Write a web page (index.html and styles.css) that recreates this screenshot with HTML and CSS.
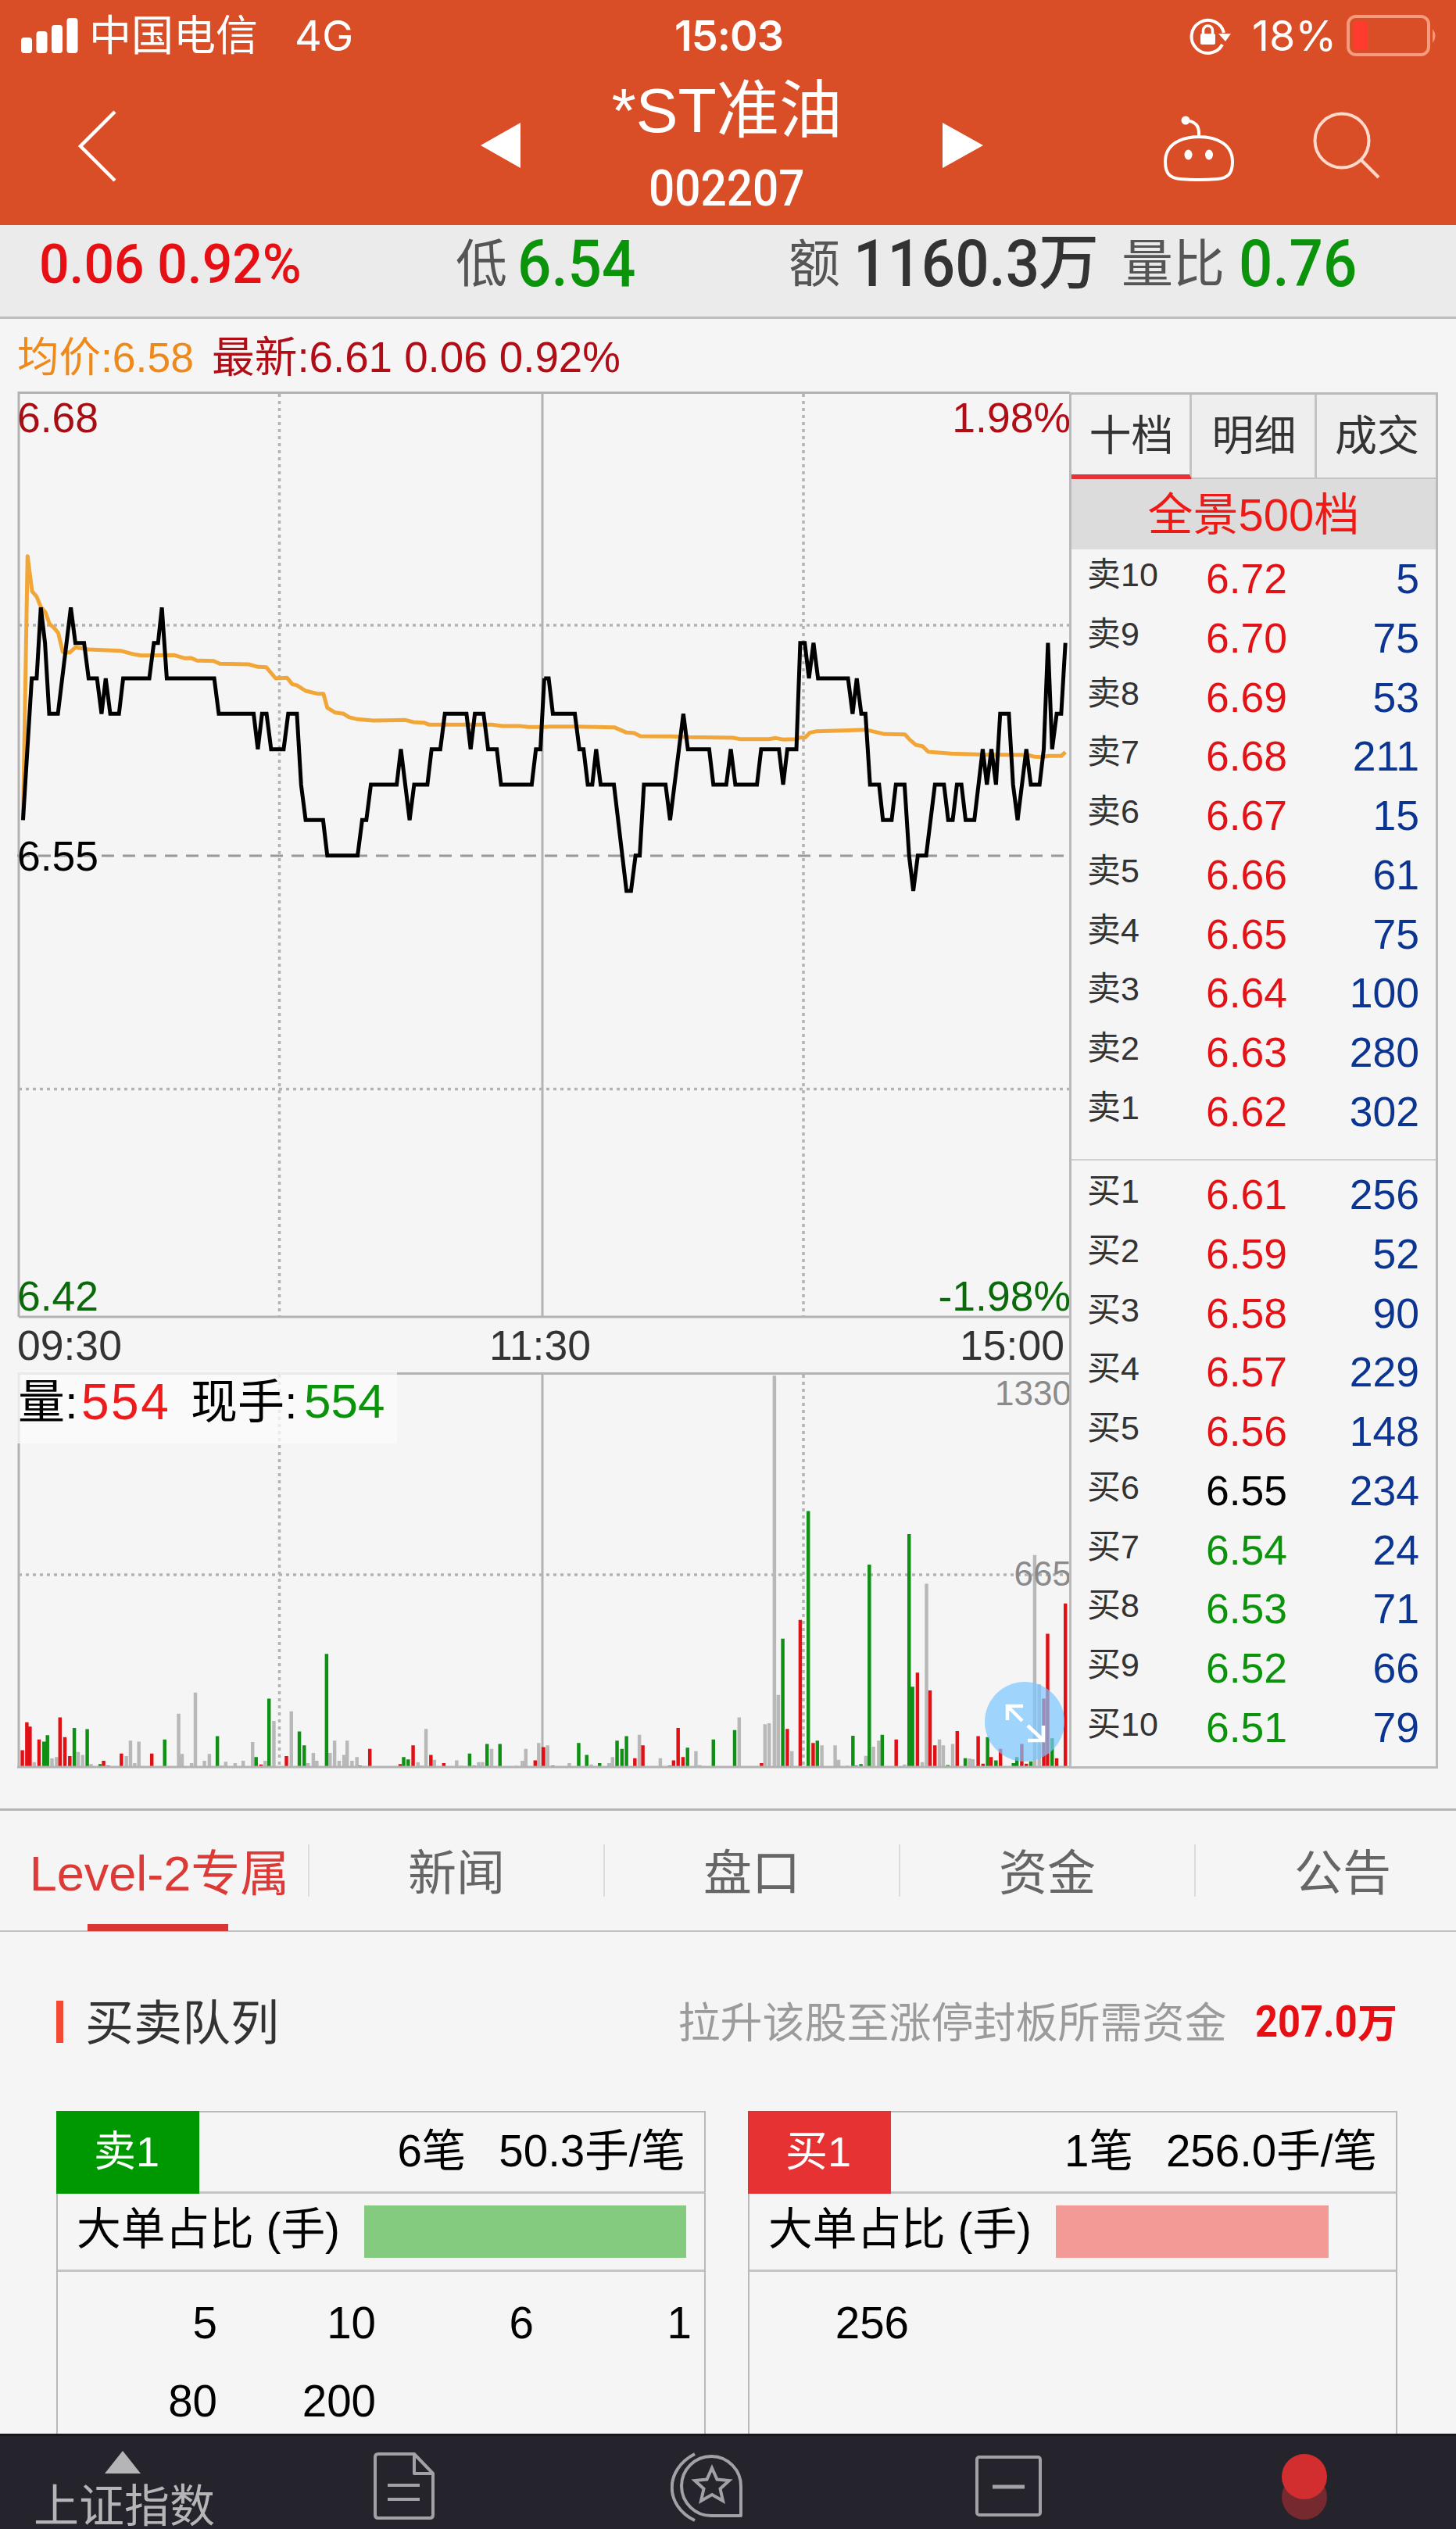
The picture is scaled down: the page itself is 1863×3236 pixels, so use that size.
FILE: index.html
```html
<!DOCTYPE html>
<html lang="zh-CN">
<head>
<meta charset="utf-8">
<title>*ST准油 002207</title>
<link rel="stylesheet" href="styles.css">
</head>
<body>
<div class="app">
  <header class="header">
    <div class="status">
      <svg class="signal" width="74" height="48" viewBox="0 0 74 48" fill="#fff"><rect x="0" y="26" width="14" height="20" rx="4"/><rect x="19.500" y="18" width="14" height="28" rx="4"/><rect x="39" y="10" width="14" height="36" rx="4"/><rect x="58.500" y="1" width="14" height="45" rx="4"/></svg>
      <span class="carrier">中国电信</span>
      <span class="network">4G</span>
      <span class="clock">15:03</span>
      <svg class="lock" width="54" height="50" viewBox="0 0 54 50"><path d="M42 36A21 21 0 1 1 44 21" fill="none" stroke="#fff" stroke-width="4"/><path d="M37 22h16l-7 10z" fill="#fff"/><rect x="14" y="22" width="19" height="14" rx="2" fill="#fff"/><path d="M17.500 23v-5a6 6 0 0 1 12 0v5" fill="none" stroke="#fff" stroke-width="3.500"/></svg>
      <span class="percent">18%</span>
      <svg class="battery" width="120" height="54" viewBox="0 0 120 54"><rect x="2" y="2" width="103" height="49" rx="10" fill="none" stroke="#f59a7c" stroke-width="4"/><path d="M110 18q7 9 0 18z" fill="#f59a7c"/><rect x="9" y="8" width="18" height="37" rx="4" fill="#ff3b30"/></svg>
    </div>
    <nav class="titlebar">
      <svg class="back" width="56" height="96" viewBox="0 0 56 96"><path d="M49 4L5 48L49 92" fill="none" stroke="#fff" stroke-width="4.500"/></svg>
      <svg class="prev" width="51" height="58" viewBox="0 0 51 58"><path d="M51 0V58L0 29z" fill="#fff"/></svg>
      <div class="title"><div class="name">*ST准油</div><div class="code"><span class="din">002207</span></div></div>
      <svg class="next" width="52" height="58" viewBox="0 0 52 58"><path d="M0 0V58L52 29z" fill="#fff"/></svg>
      <svg class="robot" width="96" height="86" viewBox="0 0 96 86" fill="none" stroke="#fff" stroke-width="4"><path d="M48 29C70 29 91 38 91 61C91 77 84 82 72 83Q48 85 24 83C12 82 5 77 5 61C5 38 26 29 48 29zM48 29C49 15 44 9 31 8"/><circle cx="31" cy="8" r="5.500" fill="#fff" stroke="none"/><ellipse cx="34.500" cy="52" rx="5" ry="6.500" fill="#fff" stroke="none"/><ellipse cx="61" cy="52" rx="5" ry="6.500" fill="#fff" stroke="none"/></svg>
      <svg class="search" width="88" height="90" viewBox="0 0 88 90" fill="none" stroke="#ffd9cb" stroke-width="4"><circle cx="38" cy="38" r="34.500"/><path d="M62 62L85 85"/></svg>
    </nav>
  </header>

  <section class="quote">
    <span class="din q-change">0.06 0.92%</span>
    <span class="q-label q-low">低</span><span class="din q-num green">6.54</span>
    <span class="q-label q-amt">额</span><span class="din q-num q-amtnum">1160.3</span><span class="q-wan">万</span>
    <span class="q-label q-ratio">量比</span><span class="din q-num green q-rationum">0.76</span>
  </section>

  <div class="legend"><span class="avg">均价:6.58</span><span class="last">最新:6.61 0.06 0.92%</span></div>

  <main class="market">
    <svg class="charts" width="1348" height="1763" viewBox="22 500 1348 1763">
      <g fill="none" stroke="#b3b3b3" stroke-width="3">
        <path d="M24 1685V502.500H1369"/>
        <path d="M24 1685H1369M694 502V1685M24 2261V1757.500H1369M694 1757V2261"/>
        <path d="M24 800H1369M24 1393.500H1369M24 2015H1369M357.500 504V1685M1028 504V1685M357.500 1759V2261M1028 1759V2261" stroke-width="3.500" stroke-dasharray="4 5"/>
        <path d="M22 1095H1369" stroke="#999" stroke-dasharray="16 11"/>
      </g>
      <svg x="24" y="502" width="1345" height="1183" viewBox="53.760 -474 3012.800 3549" preserveAspectRatio="none" fill="none">
        <g class="avgline">
          <polyline points="66,1168 79,155 92,290 105,310 117,350 130,370 142,415 155,430 167,450 180,523 200,525 216,505 254,513 345,518 385,532 405,536 500,535 530,547 548,546 565,556 612,557 630,568 712,570 740,580 763,581 790,624 823,622 838,647 850,650 876,672 910,683 927,683 938,737 960,755 985,760 1000,773 1025,781 1070,786 1162,784 1185,792 1215,794 1230,802 1410,802 1440,807 1490,807 1515,811 1560,811"/>
          <polyline transform="translate(1545.600 300)" points="14,511 30,509 100,509 215,512 250,532 272,534 290,546 380,547 430,550 555,552 575,557 658,557 678,553 700,559 735,557 748,551 762,551 775,533 795,527 870,524 935,521 990,538 1048,539 1062,560 1080,580 1098,584 1115,606 1180,613 1250,616 1280,617 1400,618 1420,625 1440,626 1460,622 1496,622 1508,607"/>
        </g>
        <g class="priceline">
          <polyline points="66,1168 91,624 105,624 117,352 129,488 141,760 166,760 203,352 216,488 241,488 254,624 278,624 291,760 303,624 316,760 341,760 353,624 428,624 441,488 453,488 464,352 478,624 614,624 627,760 727,760 739,896 751,760 764,760 777,896 813,896 826,760 851,760 863,1032 876,1168 926,1168 938,1304 1025,1304 1038,1168 1050,1168 1063,1032 1137,1032 1149,896 1174,1168 1187,1032 1225,1032 1237,896 1262,896 1275,760 1337,760 1349,896 1361,760 1386,760 1399,896 1424,896 1436,1032 1524,1032 1536,896 1549,896 1560,624"/>
          <polyline transform="translate(1545.600 300)" points="14,324 27,324 39,460 102,460 115,596 127,596 139,732 152,732 163,596 176,732 214,732 250,1140 263,1140 276,1004 288,1004 300,732 362,732 375,868 413,460 426,596 487,596 499,732 536,732 549,596 562,732 624,732 636,596 687,596 699,732 711,596 737,596 748,188 761,188 773,324 786,188 799,324 885,324 898,460 910,324 923,460 935,460 948,732 974,732 985,868 1010,868 1022,732 1047,732 1060,1004 1072,1140 1085,1004 1109,1004 1134,732 1160,732 1172,868 1185,868 1197,732 1210,732 1222,868 1247,868 1271,596 1283,732 1296,596 1309,732 1321,460 1346,460 1358,732 1371,868 1396,596 1409,732 1434,732 1446,596 1458,188 1470,596 1483,460 1496,460 1508,188"/>
        </g>
      </svg>
      <g class="axis">
        <text x="22" y="553" fill="#a80d14">6.68</text>
        <text x="1370" y="553" text-anchor="end" fill="#b00d16">1.98%</text>
        <text x="22" y="1114" fill="#000">6.55</text>
        <text x="22" y="1677" fill="#0a6a0a">6.42</text>
        <text x="1370" y="1677" text-anchor="end" fill="#0a6a0a">-1.98%</text>
        <text x="22" y="1740">09:30</text>
        <text x="691" y="1740" text-anchor="middle">11:30</text>
        <text x="1362" y="1740" text-anchor="end">15:00</text>
      </g>
      <svg x="24" y="1757" width="1345" height="504" viewBox="53.760 279 3012.800 1197" preserveAspectRatio="none" fill="none" stroke-width="10" id="volume"></svg>
      <path d="M22 2261H1369" stroke="#b3b3b3" stroke-width="3"/>
      <rect x="22" y="1755" width="486" height="92" fill="#fbfbfb" fill-opacity=".75"/>
      <g class="vol-label">
        <text x="23" y="1815">量:</text>
        <text x="104" y="1816" class="vol-now">554</text>
        <text x="244" y="1815">现手:</text>
        <text x="389" y="1814" class="vol-last">554</text>
      </g>
      <g class="vol-axis" text-anchor="end"><text x="1371" y="1798">1330</text><text x="1371" y="2029">665</text></g>
      <circle cx="1311" cy="2203" r="51" fill="#7ac8ff" fill-opacity=".7"/>
      <path d="M1289 2201V2183H1309M1289 2183L1308 2202M1315 2227H1335V2208M1335 2227L1315 2208" fill="none" stroke="#fff" stroke-width="4.500"/>
    </svg>

    <aside class="book">
      <div class="book-tabs"><div class="book-tab on">十档</div><div class="book-tab">明细</div><div class="book-tab">成交</div></div>
      <div class="panorama">全景500档</div>
      <div class="levels sell">
        <div class="level"><span class="lv">卖10</span><span class="px">6.72</span><span class="qty">5</span></div>
        <div class="level"><span class="lv">卖9</span><span class="px">6.70</span><span class="qty">75</span></div>
        <div class="level"><span class="lv">卖8</span><span class="px">6.69</span><span class="qty">53</span></div>
        <div class="level"><span class="lv">卖7</span><span class="px">6.68</span><span class="qty">211</span></div>
        <div class="level"><span class="lv">卖6</span><span class="px">6.67</span><span class="qty">15</span></div>
        <div class="level"><span class="lv">卖5</span><span class="px">6.66</span><span class="qty">61</span></div>
        <div class="level"><span class="lv">卖4</span><span class="px">6.65</span><span class="qty">75</span></div>
        <div class="level"><span class="lv">卖3</span><span class="px">6.64</span><span class="qty">100</span></div>
        <div class="level"><span class="lv">卖2</span><span class="px">6.63</span><span class="qty">280</span></div>
        <div class="level"><span class="lv">卖1</span><span class="px">6.62</span><span class="qty">302</span></div>
      </div>
      <div class="levels buy">
        <div class="level"><span class="lv">买1</span><span class="px">6.61</span><span class="qty">256</span></div>
        <div class="level"><span class="lv">买2</span><span class="px">6.59</span><span class="qty">52</span></div>
        <div class="level"><span class="lv">买3</span><span class="px">6.58</span><span class="qty">90</span></div>
        <div class="level"><span class="lv">买4</span><span class="px">6.57</span><span class="qty">229</span></div>
        <div class="level"><span class="lv">买5</span><span class="px">6.56</span><span class="qty">148</span></div>
        <div class="level"><span class="lv">买6</span><span class="px flat">6.55</span><span class="qty">234</span></div>
        <div class="level"><span class="lv">买7</span><span class="px green">6.54</span><span class="qty">24</span></div>
        <div class="level"><span class="lv">买8</span><span class="px green">6.53</span><span class="qty">71</span></div>
        <div class="level"><span class="lv">买9</span><span class="px green">6.52</span><span class="qty">66</span></div>
        <div class="level"><span class="lv">买10</span><span class="px green">6.51</span><span class="qty">79</span></div>
      </div>
    </aside>
  </main>

  <nav class="tabs">
    <div class="tab on">Level-2专属</div><div class="tab">新闻</div><div class="tab">盘口</div><div class="tab">资金</div><div class="tab">公告</div>
  </nav>

  <section class="queue">
    <div class="queue-head">
      <i class="mark"></i><h2>买卖队列</h2>
      <span class="hint">拉升该股至涨停封板所需资金</span>
      <span class="need"><span class="din">207.0</span><span class="wan">万</span></span>
    </div>
    <div class="cards">
      <div class="card">
        <div class="card-top"><span class="tag tag-sell">卖1</span><span class="cnt">6笔</span><span class="per">50.3手/笔</span></div>
        <div class="card-mid"><span>大单占比 (手)</span><i class="bar bar-sell"></i></div>
        <div class="orders"><span>5</span><span>10</span><span>6</span><span>1</span><span>80</span><span>200</span></div>
      </div>
      <div class="card">
        <div class="card-top"><span class="tag tag-buy">买1</span><span class="cnt">1笔</span><span class="per">256.0手/笔</span></div>
        <div class="card-mid"><span>大单占比 (手)</span><i class="bar bar-buy"></i></div>
        <div class="orders"><span>256</span></div>
      </div>
    </div>
  </section>

  <footer class="toolbar">
    <div class="index"><svg width="46" height="29" viewBox="0 0 46 29"><path d="M23 0L46 29H0z" fill="#b5b4b6"/></svg><span>上证指数</span></div>
    <svg class="t-doc" width="80" height="88" viewBox="0 0 80 88" fill="none" stroke="#a3a1a8" stroke-width="4"><path d="M52 2H6Q2 2 2 6V80Q2 84 6 84H72Q76 84 76 80V27L52 2V27H76" stroke-linejoin="round"/><path d="M18 42H59M18 60H59"/></svg>
    <svg class="t-star" width="96" height="90" viewBox="0 0 96 90" fill="none" stroke="#a3a1a8" stroke-width="4"><path d="M31 2C-8 22 -8 68 31 87"/><path d="M90 81H53A38 38 0 1 1 90 44z" stroke-linejoin="round"/><path d="M53 20L59.500 34.500L75 36L63.500 46.500L67 62L53 54L39 62L42.500 46.500L31 36L46.500 34.500z" stroke-width="4"/></svg>
    <svg class="t-minus" width="86" height="80" viewBox="0 0 86 80" fill="none" stroke="#a3a1a8" stroke-width="4"><rect x="2" y="3" width="81" height="74" rx="3"/><path d="M22 41H63" stroke-width="5"/></svg>
    <svg class="t-rec" width="60" height="88" viewBox="0 0 60 88"><circle cx="30" cy="57" r="29" fill="#762a30"/><circle cx="30" cy="31" r="29" fill="#d22e30"/></svg>
  </footer>
</div>
<script src="chart.js"></script>
</body>
</html>
```
FILE: styles.css
```css
* { box-sizing: border-box; }
body { margin: 0; background: #f5f5f5; font-family: "Liberation Sans", "Noto Sans CJK SC", sans-serif; color: #333; }
.app { width: 1863px; height: 3236px; display: flex; flex-direction: column; overflow: hidden; white-space: nowrap; }
.app > * { flex: none; }
svg { display: block; flex: none; }
i { font-style: normal; }
.din { font-family: Roboto, "Noto Sans CJK SC", sans-serif; font-weight: 500; display: inline-block; transform-origin: 0 50%; }
.green { color: #0b930b; }

.header { height: 288px; background: #d94e26; color: #fff; }
.status { height: 92px; display: flex; align-items: center; padding-left: 27px; font-family: Inter, "Noto Sans CJK SC", sans-serif; font-size: 54px; line-height: 94px; }
.carrier { width: 216px; margin-left: 13px; }
.network { width: 90px; margin-left: 47px; }
.clock { width: 160px; margin-left: 396px; font-weight: 600; letter-spacing: -1px; }
.lock { margin-left: 499px; }
.percent { width: 117px; margin-left: 26px; }
.battery { margin-left: 4px; }
.titlebar { height: 196px; display: grid; grid-template-columns: 98px 517px 115px 362px 111px 281px 220px 159px; }
.titlebar > * { grid-row: 1; }
.back { grid-column: 2; margin-top: 47px; }
.prev { grid-column: 3; margin-top: 65px; }
.title { grid-column: 4; margin-left: 38px; text-align: center; width: 324px; }
.name { font-size: 80.500px; line-height: 92px; margin-top: 3px; }
.code { font-size: 65px; line-height: 66px; margin-top: 21px; height: 66px; }
.code .din { transform: scaleX(.9); transform-origin: 50% 50%; }
.next { grid-column: 5; margin: 65px 0 0 114px; }
.robot { grid-column: 7; margin: 54px 0 0 2px; }
.search { grid-column: 8; margin: 50px 0 0 -25px; }

.quote { height: 120px; background: #ebebeb; border-bottom: 3px solid #bdbdbd; display: flex; line-height: 100px; padding-left: 50px; }
.q-change { width: 533px; font-size: 71px; color: #e60f14; transform: scaleX(.955); }
.q-label { font-size: 66px; color: #555; }
.q-num { font-size: 83px; transform: scaleX(.92); }
.q-low + .q-num { width: 347px; margin-left: 13px; }
.q-amt { width: 83px; }
.q-amtnum { width: 237px; color: #333; }
.q-wan { width: 106px; font-size: 77px; line-height: 97px; font-weight: 500; color: #333; }
.q-ratio { width: 150px; }

.legend { height: 94px; line-height: 99px; padding-left: 22px; font-size: 54.500px; display: flex; }
.avg { color: #ee8a1c; width: 249px; font-size: 53.500px; }
.last { color: #b00d16; font-size: 54.700px; }

.market { height: 1812px; display: flex; padding-left: 22px; }
.charts { margin-top: -2px; }
.avgline polyline { stroke: #f2a638; stroke-width: 5px; vector-effect: non-scaling-stroke; stroke-linejoin: round; }
.priceline polyline { stroke: #000; stroke-width: 5px; vector-effect: non-scaling-stroke; }
.axis { font-size: 53.500px; fill: #333; }
.vol-label { font-size: 60px; }
.vol-now { font-size: 64px; fill: #ee1a1c; letter-spacing: 2.500px; }
.vol-last { font-size: 62px; fill: #0b930b; }
.vol-axis { font-size: 44px; fill: #8a8a8a; }

.book { width: 472px; height: 1761px; border: 3px solid #bababa; margin-left: -2px; }
.book-tabs { height: 108px; display: grid; grid-template-columns: 154px 160px 1fr; background: #eee; border-bottom: 2px solid #c4c4c4; }
.book-tab { text-align: center; font-size: 54px; line-height: 106px; border-right: 3px solid #c4c4c4; height: 106px; padding-left: 2px; }
.book-tab:last-child { border-right: 0; }
.book-tab.on { border-bottom: 6px solid #e73337; height: 108px; background: #f2f2f2; }
.panorama { height: 90px; background: #dcdcdc; color: #ee1a16; font-size: 58px; line-height: 92px; text-align: center; }
.levels { display: flex; flex-direction: column; }
.sell { height: 782px; border-bottom: 2px solid #cfcfcf; }
.buy { padding-top: 6px; }
.level { height: 75.750px; display: grid; grid-template-columns: 152px 129px 1fr; padding: 0 21px 0 20px; font-size: 53.500px; line-height: 76px; }
.lv { font-size: 43px; line-height: 65px; }
.buy .lv { line-height: 67px; }
.px { color: #e21216; }
.px.green { color: #0b930b; }
.px.flat { color: #000; }
.qty { color: #0b3590; text-align: right; }

.tabs { height: 158px; border-top: 3px solid #b4b4b4; border-bottom: 2px solid #c0c0c0; display: flex; padding-left: 17px; }
.tab { width: 378px; flex: none; text-align: center; font-size: 62px; line-height: 161px; color: #666; position: relative; }
.tab + .tab::before { content: ""; position: absolute; left: -1px; top: 43px; width: 2px; height: 67px; background: #dcdcdc; }
.tab.on { color: #dc3a37; font-size: 63px; padding-right: 4px; }
.tab.on::after { content: ""; position: absolute; left: 95px; bottom: -1px; width: 180px; height: 9px; background: #d83732; }

.queue { height: 642px; padding: 0 75px 0 72px; }
.queue-head { height: 229px; display: flex; align-items: center; }
.mark { width: 9px; height: 54px; background: #f44a33; }
.queue-head h2 { margin: -5px 0 0 28px; font-size: 62px; font-weight: 400; width: 759px; }
.hint { font-size: 54px; color: #9b9b9b; width: 739px; margin-top: -4px; font-weight: 400; }
.need { color: #e60f14; font-size: 55px; display: flex; align-items: center; }
.need .din { font-weight: 700; width: 131px; transform: scaleX(.92); }
.need .wan { font-weight: 700; font-size: 51px; margin-top: -4px; }
.cards { display: flex; justify-content: space-between; height: 413px; }
.card { width: 831px; border: 2px solid #b9b9b9; border-bottom: 0; color: #000; font-size: 56.500px; }
.card-top { height: 104px; display: flex; justify-content: flex-end; border-bottom: 3px solid #c4c4c4; line-height: 100px; padding-right: 24px; }
.tag { width: 183px; height: 106px; margin: -2px auto 0 -2px; text-align: center; color: #fff; font-size: 54px; }
.tag { line-height: 104px; padding-right: 3px; }
.tag-sell { background: #009800; }
.tag-buy { background: #e63232; }
.cnt { margin-right: 42px; }
.card-mid { height: 100px; border-bottom: 3px solid #c4c4c4; display: flex; align-items: center; padding-left: 24px; }
.card-mid span { width: 368px; line-height: 92px; height: 98px; font-size: 56.700px; }
.bar { height: 67px; }
.bar-sell { width: 412px; background: #84cb80; }
.bar-buy { width: 349px; background: #f49a96; }
.orders { display: grid; grid-template-columns: 204px 203px 202px 202px; text-align: right; line-height: 100px; padding-top: 16px; }

.toolbar { height: 122px; background: #25242c; border-top: 3px solid #17161b; display: flex; color: #b5b4b6; }
.index { width: 435px; display: flex; flex-direction: column; padding-left: 43px; font-size: 58px; line-height: 70px; }
.index svg { margin: 19px 0 7px 91px; }
.t-doc { margin: 21px 0 0 43px; }
.t-star { margin: 21px 0 0 300px; }
.t-minus { margin: 24px 0 0 294px; }
.t-rec { margin: 21px 0 0 305px; }
```
FILE: chart.js
```js
// Volume bars as x, top pairs; the baseline sits at y = 1476.
const BASE = 1476;
const AFTERNOON = 1545.6;
const volumes = [
  { shift: 0, color: '#b8b8b8', bars: [98,1461,149,1450,162,1446,224,1430,237,1439,261,1467,362,1443,374,1396,386,1464,398,1399,512,1314,522,1436,549,1464,560,1250,586,1457,600,1436,636,1471,647,1460,674,1464,697,1457,724,1400,760,1457,785,1336,835,1307,883,1464,898,1433,908,1457,946,1433,959,1396,972,1457,986,1439,995,1396,1009,1457,1023,1446,1198,1461,1208,1471,1221,1360,1245,1454,1309,1456,1322,1472,1372,1461,1383,1461,1409,1421,1480,1472,1497,1457,1507,1421,1544,1403] },
  { shift: 0, color: '#e01015', bars: [64,1425,77,1340,86,1353,112,1392,172,1325,186,1385,200,1443,297,1457,348,1435,435,1435,748,1468,821,1443,1032,1471,1060,1421,1147,1467,1184,1410,1235,1439,1272,1464,1359,1472,1534,1456,1557,1416] },
  { shift: 0, color: '#0f8f14', bars: [126,1399,136,1379,213,1357,250,1361,287,1467,310,1471,472,1392,623,1382,734,1446,771,1268,858,1368,872,1410,936,1132,1157,1446,1170,1453,1346,1435,1396,1406,1433,1406] },
  { shift: AFTERNOON, color: '#b8b8b8', bars: [24,1410,86,1464,149,1468,200,1464,210,1446,287,1378,347,1449,449,1428,460,1470,573,1325,647,1346,659,1343,674,287,685,1257,724,1428,810,1410,848,1410,858,1454,883,1472,936,1442,958,1414,973,1396,1047,1468,1098,1461,1110,919,1147,1392,1158,1410,1185,1406,1233,1450,1243,1452,1420,832,1433,1225] },
  { shift: AFTERNOON, color: '#e01015', bars: [12,1416,274,1449,297,1410,385,1456,398,1357,412,1446,637,1464,711,1360,748,1029,785,1403,908,1471,1023,1392,1084,1189,1120,1243,1134,1410,1198,1367,1258,1382,1272,1466,1295,1446,1322,1421,1383,1406,1396,1466,1446,1268,1457,1071,1483,1449,1508,979] },
  { shift: AFTERNOON, color: '#0f8f14', bars: [39,1471,113,1403,136,1439,173,1464,223,1396,237,1421,250,1382,374,1471,425,1417,499,1392,560,1364,698,1086,771,698,797,1396,899,1381,922,1467,946,861,983,1378,1060,768,1070,1232,1171,1470,1221,1449,1285,1385,1309,1456,1359,1464,1369,1446,1409,1459,1470,1389] }
];
const host = document.getElementById('volume');
for (const { shift, color, bars } of volumes) {
  let d = '';
  for (let i = 0; i < bars.length; i += 2) d += `M${bars[i] + shift} ${BASE}V${bars[i + 1]}`;
  const path = document.createElementNS('http://www.w3.org/2000/svg', 'path');
  path.setAttribute('d', d);
  path.setAttribute('stroke', color);
  host.appendChild(path);
}
```
